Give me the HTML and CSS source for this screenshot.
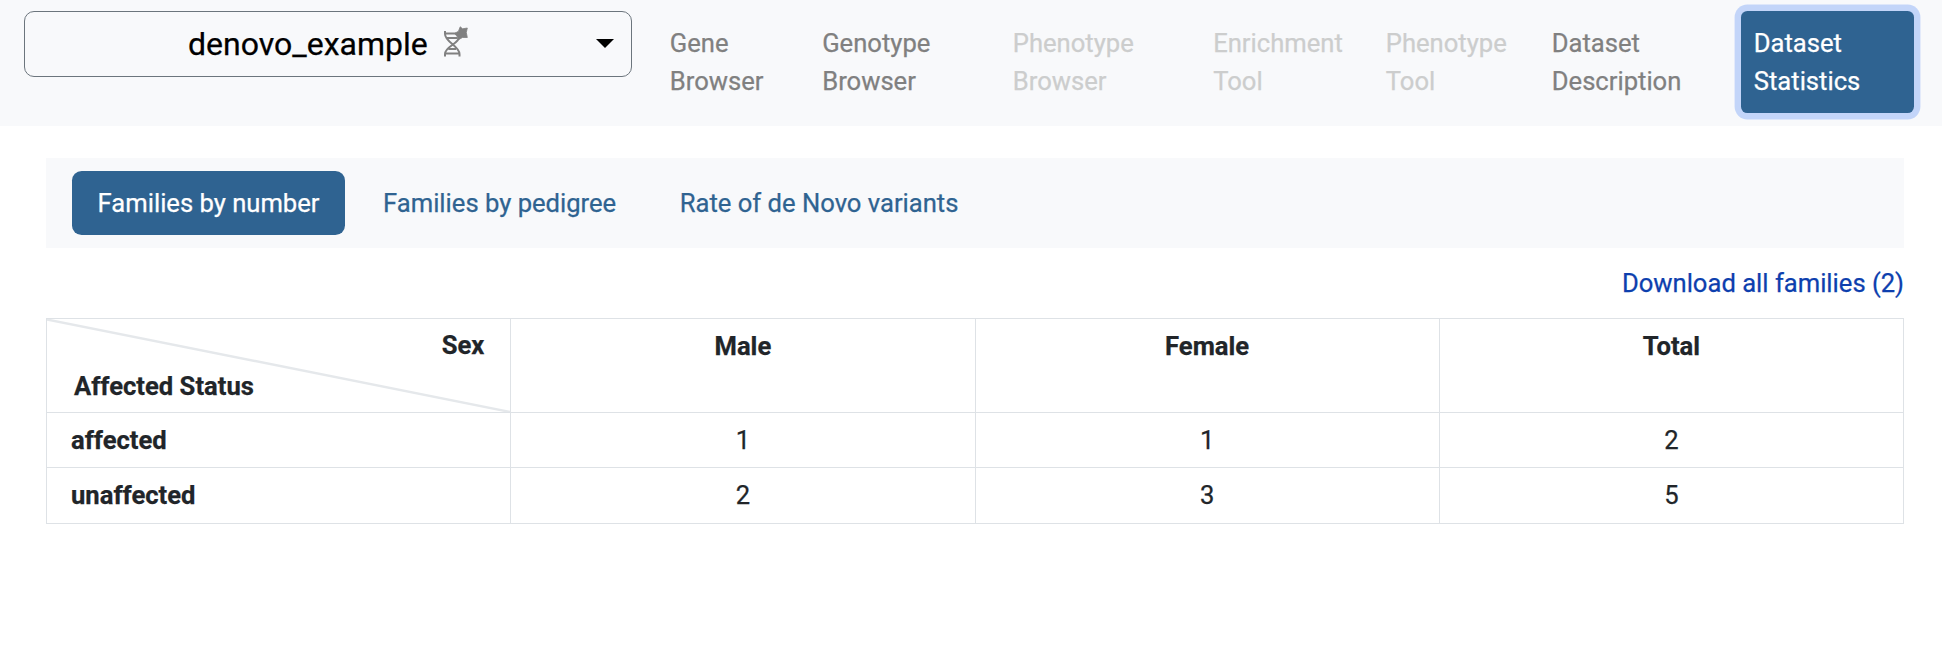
FILE: index.html
```html
<!DOCTYPE html>
<html lang="en">
<head>
<meta charset="utf-8">
<title>Dataset Statistics</title>
<link rel="stylesheet" href="styles.css">
</head>
<body>
<header class="topbar">
  <button class="dataset-select" type="button">
    <span class="dataset-name">denovo_example</span>
    <svg class="dna" width="26" height="32" viewBox="0 0 26 32" fill="none" stroke="#808080" stroke-width="2">
      <path d="M2 5V8C2 16 16.500 20 16.500 28V30.500M16.500 10C16.500 18 2 20 2 28V30.500M3 7.500H13M4 12H14.500M5.500 23H13M3 27.500H15.500"/>
      <path d="M17.200 .8L19.600 2.800L24.300 2L23.300 6.500L24.300 11.500L19.500 11.500L15.800 13.500L13.800 10L11.500 7.500L15.500 5.200Z" fill="#808080" stroke-width=".8" stroke-linejoin="round"/>
    </svg>
    <svg class="caret" width="18" height="10" viewBox="0 0 18 10"><path d="M0 0H18L9 9Z"/></svg>
  </button>
  <nav class="tools">
    <a class="tool">Gene<br>Browser</a>
    <a class="tool">Genotype<br>Browser</a>
    <a class="tool disabled">Phenotype<br>Browser</a>
    <a class="tool disabled">Enrichment<br>Tool</a>
    <a class="tool disabled">Phenotype<br>Tool</a>
    <a class="tool">Dataset<br>Description</a>
    <a class="tool active">Dataset<br>Statistics</a>
  </nav>
</header>
<main class="content">
  <nav class="views">
    <a class="view active">Families by number</a>
    <a class="view">Families by pedigree</a>
    <a class="view">Rate of de Novo variants</a>
  </nav>
  <div class="download"><a class="download-link">Download all families (2)</a></div>
  <table class="families">
    <thead>
      <tr>
        <th class="corner">
          <svg class="diagonal" viewBox="0 0 464 93" preserveAspectRatio="none"><path d="M0 0.500L464 93" stroke="#e5e8eb" stroke-width="2.400"/></svg>
          <div class="corner-column">Sex</div>
          <div class="corner-row">Affected Status</div>
        </th>
        <th>Male</th><th>Female</th><th>Total</th>
      </tr>
    </thead>
    <tbody>
      <tr><th>affected</th><td>1</td><td>1</td><td>2</td></tr>
      <tr><th>unaffected</th><td>2</td><td>3</td><td>5</td></tr>
    </tbody>
  </table>
</main>
</body>
</html>
```
FILE: styles.css
```css
html {
  font-size: 25.6px;
}

body {
  margin: 0;
  background: #fff;
  color: #212529;
  font-family: Roboto, sans-serif;
  line-height: 1.5;
  -webkit-text-stroke: 0.25px currentColor;
}

.topbar {
  display: flex;
  align-items: flex-start;
  box-sizing: border-box;
  height: 126px;
  padding: 11px 28px 0 24px;
  background: #f8f9fb;
}

.dataset-select {
  display: flex;
  align-items: center;
  box-sizing: border-box;
  flex: none;
  width: 608px;
  height: 66px;
  margin-right: 25px;
  padding: 0 17px 0 163px;
  border: 1px solid #6c757d;
  border-radius: 10px;
  background: transparent;
  color: #000;
  font: 32px/48px Roboto, sans-serif;
}

.dna {
  margin: 0 0 4px 15px;
}

.caret {
  margin-left: auto;
}

.tools {
  display: grid;
  grid-template-columns: 152.4px 190.6px 200.4px 172.6px 166px 202px 173px;
}

.tool {
  box-sizing: border-box;
  height: 102px;
  padding: 12.8px;
  border-radius: 6.4px;
  color: #808080;
  white-space: nowrap;
}

.tool.disabled {
  color: #cccdcd;
}

.tool.active {
  background: #2f6391;
  box-shadow: 0 0 0 6.4px #c3d5f9;
  color: #fff;
}

.content {
  padding: 32px 38px 0 46px;
}

.views {
  display: flex;
  box-sizing: border-box;
  height: 90px;
  padding: 13px 26px;
  background: #f8f9fb;
}

.view {
  padding: 12.8px 25.6px;
  border-radius: 9.6px;
  color: #2f6391;
}

.view + .view {
  margin-left: 12.4px;
}

.view.active {
  background: #2f6391;
  color: #fff;
}

.download {
  height: 54px;
  margin-top: 16px;
  text-align: right;
}

.download-link {
  color: #0d3fae;
}

.families {
  width: 1858px;
  table-layout: fixed;
  border-collapse: collapse;
}

.families th,
.families td {
  box-sizing: border-box;
  height: 55px;
  padding: 8px 24px;
  border: 1px solid #dee2e6;
  text-align: center;
  vertical-align: top;
}

.families thead th {
  height: 94px;
}

.families tbody th {
  text-align: left;
}

.families .corner {
  position: relative;
  padding: 7px 26px 0 27px;
}

.diagonal {
  position: absolute;
  inset: 0;
  width: 100%;
  height: 100%;
}

.corner-column {
  height: 41px;
  text-align: right;
}

.corner-row {
  text-align: left;
}
```
